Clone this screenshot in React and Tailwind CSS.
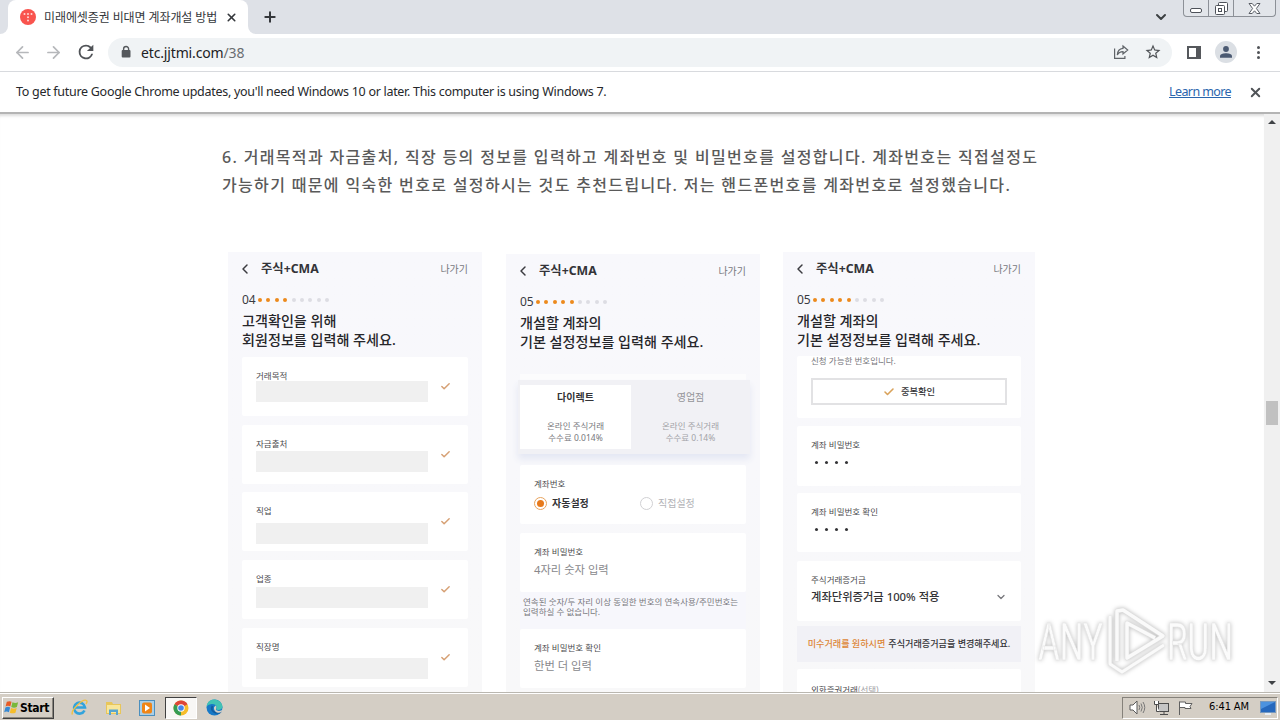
import { ArrowLeft, ArrowRight, Check, ChevronDown, ChevronLeft, Plus, X } from "lucide-react";

const purposeFields = [
  { label: "거래목적", gap: "h-[24px]" },
  { label: "자금출처", gap: "h-[26px]" },
  { label: "직업", gap: "h-[31px]" },
  { label: "업종", gap: "h-[27px]" },
  { label: "직장명", gap: "h-[30px]" },
];

function WindowButtons() {
  return (
    <div className="flex h-[17px] w-[93px] rounded-b-[4px] border border-t-0 border-[#8c9097] bg-[#e2e5ea]">
      <div className="flex w-[25px] justify-center border-r border-[#8c9097] pt-[8px]">
        <div className="h-[5px] w-[12px] rounded-[2px] border border-[#4d5159] bg-white"></div>
      </div>
      <div className="flex w-[25px] justify-center border-r border-[#8c9097] pt-[2px]">
        <svg width="13" height="13" viewBox="0 0 13 13" fill="#fff" stroke="#4d5159">
          <rect x="3.5" y="0.5" width="9" height="9" rx="1" />
          <rect x="0.5" y="3.5" width="9" height="9" rx="1" />
          <rect x="3.5" y="6.5" width="3" height="3" />
        </svg>
      </div>
      <div className="flex flex-1 justify-center pt-[3px]">
        <svg width="13" height="12" viewBox="0 0 13 12" fill="#fff" stroke="#5a5e66">
          <path d="M1 .5h3.200l2.300 2.700L8.800.5H12L8.400 5.500 12 10.500H8.800L6.500 7.800 4.200 10.500H1l3.600-5z" />
        </svg>
      </div>
    </div>
  );
}

function TabStrip() {
  return (
    <div className="flex h-[34px] shrink-0 bg-[#dee1e7]">
      <div className="flex w-[8px] bg-white">
        <div className="w-full rounded-br-[8px] bg-[#dee1e7]"></div>
      </div>
      <div className="flex w-[240px] items-center rounded-t-[8px] bg-white pl-[12px]">
        <svg width="16" height="16" viewBox="0 0 16 16">
          <circle cx="8" cy="8" r="8" fill="#f9544e" />
          <g fill="#ffd9d6">
            <circle cx="4.500" cy="5" r="1" />
            <circle cx="8" cy="5" r="1" />
            <circle cx="11.500" cy="5" r="1" />
            <circle cx="8" cy="8.300" r="1" />
            <circle cx="8" cy="11.500" r="1" />
          </g>
        </svg>
        <span className="ml-[8px] mt-[2px] w-[174px] whitespace-nowrap text-[12px] tracking-[-0.1px] text-[#34373b]">
          미래에셋증권 비대면 계좌개설 방법
        </span>
        <X className="ml-[7px] h-[13px] w-[13px] text-[#34373b]" strokeWidth={3} />
      </div>
      <div className="flex w-[8px] bg-white">
        <div className="w-full rounded-bl-[8px] bg-[#dee1e7]"></div>
      </div>
      <Plus className="ml-[6px] mt-[9px] h-[16px] w-[16px] text-[#34373b]" strokeWidth={3} />
      <div className="flex-1"></div>
      <ChevronDown className="mr-[14px] mt-[9px] h-[16px] w-[16px] text-[#3c4043]" strokeWidth={3} />
      <WindowButtons />
      <div className="w-[4px]"></div>
    </div>
  );
}

function Toolbar() {
  return (
    <div className="flex h-[38px] shrink-0 items-center border-b border-[#d8dade] bg-white pb-[1px] pl-[13px]">
      <ArrowLeft className="h-[19px] w-[19px] text-[#b6b8bb]" strokeWidth={2.2} />
      <ArrowRight className="ml-[12px] h-[19px] w-[19px] text-[#b6b8bb]" strokeWidth={2.2} />
      <svg className="ml-[12px]" width="22" height="22" viewBox="0 0 24 24" fill="#505357">
        <path d="M17.650 6.350A7.960 7.960 0 0 0 12 4a8 8 0 1 0 7.730 10h-2.080A6 6 0 1 1 12 6c1.660 0 3.140.690 4.220 1.780L13 11h7V4z" />
      </svg>
      <div className="ml-[11px] flex h-[29px] w-[1064px] items-center rounded-full bg-[#f0f3f5] pl-[12px] pr-[10px]">
        <svg width="12" height="14" viewBox="0 0 12 14">
          <rect x="1.700" y="5" width="8.800" height="7.500" rx="1" fill="#55585c" />
          <path d="M3.600 5.500V4a2.500 2.500 0 0 1 5 0v1.500" fill="none" stroke="#55585c" strokeWidth="1.400" />
        </svg>
        <span className="ml-[9px] whitespace-nowrap text-[14px] tracking-[-0.15px] text-[#202124]">
          etc.jjtmi.com<span className="text-[#6a6d71]">/38</span>
        </span>
        <div className="flex-1"></div>
        <svg width="16" height="16" viewBox="0 0 16 16" fill="none" stroke="#5f6368" strokeWidth="1.200">
          <path d="M1.600 4.500v9.900h10.300v-2.500" />
          <path d="M10 2l4.700 4-4.700 4V7.700C7.300 7.700 5.500 8.700 4.300 11 4.500 7.200 6.600 4.700 10 4.400z" />
        </svg>
        <svg className="ml-[15px]" width="18" height="18" viewBox="0 0 24 24" fill="#505357">
          <path d="M22 9.240l-7.190-.620L12 2 9.190 8.630 2 9.240l5.460 4.730L5.820 21 12 17.270 18.180 21l-1.630-7.030L22 9.240zM12 15.400l-3.760 2.270 1-4.280-3.320-2.880 4.380-.380L12 6.100l1.710 4.040 4.380.380-3.320 2.880 1 4.280L12 15.400z" />
        </svg>
      </div>
      <div className="ml-[15px] h-[13px] w-[14px] border-2 border-r-[5px] border-[#55585c]"></div>
      <div className="ml-[14px] flex h-[22px] w-[22px] items-center justify-center rounded-full bg-[#dbdfe4]">
        <svg width="14" height="14" viewBox="0 0 14 14" fill="#4b5a72">
          <circle cx="7" cy="4" r="2.900" />
          <path d="M1 12.800v-1.600C1 9 4.500 8.200 7 8.200s6 .800 6 3v1.600z" />
        </svg>
      </div>
      <div className="ml-[20px] flex flex-col gap-[2px]">
        <div className="h-[3px] w-[3px] rounded-full bg-[#505357]"></div>
        <div className="h-[3px] w-[3px] rounded-full bg-[#505357]"></div>
        <div className="h-[3px] w-[3px] rounded-full bg-[#505357]"></div>
      </div>
    </div>
  );
}

function InfoBar() {
  return (
    <div className="flex h-[42px] shrink-0 items-center border-b-2 border-[#b4b4b4] bg-white pl-[16px] pr-[17px] text-[12.5px] text-[#26282b]">
      <span className="whitespace-nowrap tracking-[-0.29px]">
        To get future Google Chrome updates, you'll need Windows 10 or later. This computer is using Windows 7.
      </span>
      <div className="flex-1"></div>
      <a className="whitespace-nowrap tracking-[-0.6px] text-[#2a65ad] underline">Learn more</a>
      <X className="ml-[17px] h-[15px] w-[15px] text-[#505357]" strokeWidth={3} />
    </div>
  );
}

// Common frame of the phone captures: title bar, step dots and two-line heading
function PhoneScreen({ className, step, done, lines, children }) {
  return (
    <div className={`flex flex-col overflow-hidden bg-linear-to-b from-[#f8f8fc] via-[#f8f8fb] to-[#f8f8f9] px-[14px] ${className}`}>
      <div className="flex h-[34px] shrink-0 items-center">
        <ChevronLeft className="-ml-[5px] h-[16px] w-[16px] text-[#3b3b40]" strokeWidth={2.2} />
        <span className="ml-[8px] mt-[1px] whitespace-nowrap text-[12.3px] font-bold text-[#333338]">주식+CMA</span>
        <span className="ml-auto whitespace-nowrap text-[10px] text-[#77777c]">나가기</span>
      </div>
      <div className="flex h-[28px] shrink-0 items-center">
        <span className="w-[16px] text-[12px] text-[#3a3a42]">{step}</span>
        <div className="flex gap-[4.4px]">
          {[...Array(9)].map((_, i) => (
            <div key={i} className={`h-[4px] w-[4px] rounded-full ${i < done ? "bg-[#ec8a1c]" : "bg-[#dddde3]"}`}></div>
          ))}
        </div>
      </div>
      <div className="-mt-[3px] h-[46px] shrink-0 whitespace-nowrap text-[14.1px] font-medium leading-[19px] text-[#26262a]">
        {lines.map((line) => (
          <p key={line}>{line}</p>
        ))}
      </div>
      {children}
    </div>
  );
}

function Card({ className, children }) {
  return <div className={`shrink-0 overflow-hidden rounded-[2px] bg-white px-[14px] ${className}`}>{children}</div>;
}

function Label({ children }) {
  return <p className="h-[12px] whitespace-nowrap text-[8.5px] leading-[12px] text-[#4a4a4e]">{children}</p>;
}

function Pin() {
  return (
    <div className="flex h-[22px] items-center gap-[7px] pl-[4px]">
      {[0, 1, 2, 3].map((i) => (
        <div key={i} className="h-[3px] w-[3px] rounded-full bg-[#333336]"></div>
      ))}
    </div>
  );
}

function CustomerScreen() {
  return (
    <PhoneScreen className="h-[440px] w-[254px]" step="04" done={4} lines={["고객확인을 위해", "회원정보를 입력해 주세요."]}>
      <div className="flex flex-col gap-[8.7px]">
        {purposeFields.map((field) => (
          <Card key={field.label} className="flex h-[59px] items-center justify-between pr-[17px]">
            <div className="h-full w-[172px]">
              <div className={`pt-[13px] ${field.gap}`}>
                <Label>{field.label}</Label>
              </div>
              <div className="h-[21px] bg-[#f0f0f0]"></div>
            </div>
            <Check className="h-[11px] w-[11px] text-[#d6a074]" strokeWidth={3.2} />
          </Card>
        ))}
      </div>
    </PhoneScreen>
  );
}

function AccountScreen() {
  return (
    <PhoneScreen
      className="mt-[2px] h-[438px] w-[254px]"
      step="05"
      done={5}
      lines={["개설할 계좌의", "기본 설정정보를 입력해 주세요."]}
    >
      <div className="mt-[15px] h-[6px] shrink-0 bg-[#fcfcfd]"></div>
      <div className="-ml-[2px] -mr-[4px] flex h-[74px] shrink-0 bg-[#f1f1f5] py-[5px] pl-[2px] text-center shadow-[0_5px_7px_#e4e7f3]">
        <div className="w-[111px] bg-white pt-[4px]">
          <p className="h-[16px] text-[10px] font-bold leading-[16px] text-[#333336]">다이렉트</p>
          <p className="mt-[15px] text-[8.5px] leading-[12px] text-[#77777c]">온라인 주식거래<br />수수료 0.014%</p>
        </div>
        <div className="flex-1 pt-[4px]">
          <p className="h-[16px] text-[10px] leading-[16px] text-[#949499]">영업점</p>
          <p className="mt-[15px] text-[8.5px] leading-[12px] text-[#a2a2a7]">온라인 주식거래<br />수수료 0.14%</p>
        </div>
      </div>
      <Card className="mt-[11px] h-[59px] pt-[13px]">
        <Label>계좌번호</Label>
        <div className="mt-[5px] flex h-[16px] items-center whitespace-nowrap text-[10px]">
          <div className="flex h-[13px] w-[13px] items-center justify-center rounded-full border border-[#e7a35e]">
            <div className="h-[7px] w-[7px] rounded-full bg-[#e77a1c]"></div>
          </div>
          <span className="ml-[5px] w-[88px] font-bold text-[#333336]">자동설정</span>
          <div className="h-[13px] w-[13px] rounded-full border border-[#d0d0d3]"></div>
          <span className="ml-[5px] text-[#b4b4b8]">직접설정</span>
        </div>
      </Card>
      <Card className="mt-[9px] h-[59px] pt-[13px]">
        <Label>계좌 비밀번호</Label>
        <p className="mt-[4px] text-[11.3px] leading-[16px] text-[#88888c]">4자리 숫자 입력</p>
      </Card>
      <div className="h-[37px] shrink-0 whitespace-nowrap bg-[#f7f7fc] pl-[3px] pt-[5px] text-[8.5px] leading-[10px] text-[#77777c]">
        <p>연속된 숫자/두 자리 이상 동일한 번호의 연속사용/주민번호는</p>
        <p>입력하실 수 없습니다.</p>
      </div>
      <Card className="h-[59px] pt-[13px]">
        <Label>계좌 비밀번호 확인</Label>
        <p className="mt-[4px] text-[11.3px] leading-[16px] text-[#88888c]">한번 더 입력</p>
      </Card>
    </PhoneScreen>
  );
}

function PasswordScreen() {
  return (
    <PhoneScreen className="h-[440px] w-[252px]" step="05" done={5} lines={["개설할 계좌의", "기본 설정정보를 입력해 주세요."]}>
      <Card className="-mt-[1px] h-[62px]">
        <p className="h-[22px] text-[8.5px] leading-[10px] text-[#77777c]">신청 가능한 번호입니다.</p>
        <div className="flex h-[27px] items-center justify-center gap-[6px] border-2 border-[#e2e2e4] text-[9.3px] font-medium text-[#333336]">
          <Check className="h-[12px] w-[12px] text-[#d9a25a]" strokeWidth={3.2} />
          중복확인
        </div>
      </Card>
      <Card className="mt-[8px] h-[60px] pt-[13px]">
        <Label>계좌 비밀번호</Label>
        <Pin />
      </Card>
      <Card className="mt-[7px] h-[59px] pt-[13px]">
        <Label>계좌 비밀번호 확인</Label>
        <Pin />
      </Card>
      <Card className="mt-[9px] h-[60px] pt-[13px]">
        <Label>주식거래증거금</Label>
        <div className="mt-[3px] flex h-[16px] items-center justify-between whitespace-nowrap text-[11.3px] font-medium text-[#333336]">
          계좌단위증거금 100% 적용
          <ChevronDown className="h-[12px] w-[12px] text-[#77777c]" strokeWidth={2.6} />
        </div>
      </Card>
      <div className="mt-[5px] flex h-[36px] shrink-0 items-center justify-center whitespace-nowrap bg-[#f1f1f6] text-[9.1px] font-medium text-[#333336]">
        <span className="mr-[3px] text-[#dd8637]">미수거래를 원하시면</span>
        주식거래증거금을 변경해주세요.
      </div>
      <Card className="mt-[7px] h-[40px] pt-[15px]">
        <Label>외화증권거래<span className="text-[#a2a2a7]">(선택)</span></Label>
      </Card>
    </PhoneScreen>
  );
}

function Scrollbar() {
  return (
    <div className="flex w-[16px] flex-col items-center bg-[#f0f0f0] pt-[6px]">
      <div className="border-x-4 border-b-4 border-x-transparent border-b-[#404347]"></div>
      <div className="mt-[277px] h-[24px] w-[12px] bg-[#c1c1c1]"></div>
      <div className="flex-1"></div>
      <div className="mb-[7px] border-x-4 border-t-4 border-x-transparent border-t-[#404347]"></div>
    </div>
  );
}

function Watermark() {
  return (
    <svg className="absolute left-[1034px] top-[604px] drop-shadow-[0_0_2px_#bcbcbc]" width="214" height="76" viewBox="0 0 214 76">
      <g fill="#fbfbfb" stroke="#e4e4e4" strokeWidth="0.5" fontFamily="Roboto, sans-serif" fontSize="52" fontWeight="400">
        <text x="4" y="56" textLength="65" lengthAdjust="spacingAndGlyphs">ANY</text>
        <text x="133" y="56" textLength="66" lengthAdjust="spacingAndGlyphs">RUN</text>
      </g>
      <g fill="none" strokeLinejoin="round">
        <path d="M76 12v48l12 8 42-27" stroke="#e4e4e4" strokeWidth="4" />
        <path d="M76 12v48l12 8 42-27" stroke="#fafafa" strokeWidth="2.800" />
        <path d="M83 57V7l6-1 40 26-36 22V19l28 15" stroke="#e0e0e0" strokeWidth="4.600" />
        <path d="M83 57V7l6-1 40 26-36 22V19l28 15" stroke="#fafafa" strokeWidth="3.400" />
      </g>
    </svg>
  );
}

function Taskbar() {
  return (
    <div className="flex h-[28px] shrink-0 items-center border-t border-[#bab7b0] bg-[#d4cec5] pt-[2px] shadow-[inset_0_1px_0_#fff]">
      <div className="ml-[2px] flex h-[22px] w-[52px] items-center border border-b-[#404040] border-l-white border-r-[#404040] border-t-white pl-[1px] shadow-[inset_-1px_-1px_0_#8a867e]">
        <svg className="shrink-0" width="16" height="17" viewBox="0 0 17 17">
          <path d="M3 2.500q3-1.500 5 0l-1.300 5q-2.500-1.500-5 0z" fill="#e85b25" />
          <path d="M9 3q3 1.500 6 0l-1.300 5q-3 1.300-6 0z" fill="#78b83b" />
          <path d="M1.500 8.500q3-1.500 5 0l-1.300 5q-2.500-1.500-5 0z" fill="#3689d4" />
          <path d="M7.500 9q3 1.500 6 0l-1.300 5q-3 1.300-6 0z" fill="#f5bd2b" />
        </svg>
        <span className="font-['DejaVu_Sans_Condensed','DejaVu_Sans',sans-serif] text-[12px] font-bold tracking-[-0.3px] text-black">Start</span>
      </div>
      <svg className="ml-[17px]" width="17" height="17" viewBox="0 0 17 17" fill="none">
        <path d="M13.500 11.500A5.500 5.500 0 1 1 14 8.500H4" stroke="#31a3dc" strokeWidth="2.600" />
        <path d="M1.500 15.500C-1 12 12-1 15.500 1.500c1 .800.300 2.500-.500 3.500" stroke="#f0c144" strokeWidth="1.400" />
      </svg>
      <svg className="ml-[17px]" width="17" height="16" viewBox="0 0 17 16">
        <path d="M1 2h6l1 2h8v10H1z" fill="#e8c65a" />
        <path d="M2 5h13v8H2z" fill="#f8e69b" />
        <path d="M4 15V9.500h9V15h-2v-3H6v3z" fill="#58a5cf" />
      </svg>
      <svg className="ml-[17px]" width="16" height="16" viewBox="0 0 16 16">
        <rect x="0.500" y="0.500" width="15" height="15" fill="#a9cfe8" stroke="#4b8fbe" />
        <rect x="3" y="2.500" width="10" height="11" rx="2" fill="#f08516" />
        <path d="M6 4.500l5 3.500-5 3.500z" fill="#fff" />
      </svg>
      <div className="ml-[10px] flex h-[22px] w-[32px] items-center justify-center border border-b-white border-l-[#404040] border-r-white border-t-[#404040] bg-[#f8f7f5]">
        <svg width="16" height="16" viewBox="0 0 16 16">
          <circle cx="8" cy="8" r="7.500" fill="#f6bd2a" />
          <path d="M8 8L1.500 4.250A7.500 7.500 0 0 1 14.500 4.250z" fill="#dd4638" />
          <path d="M8 8L8 15.500A7.500 7.500 0 0 1 1.500 4.250z" fill="#359c54" />
          <circle cx="8" cy="8" r="3.700" fill="#fff" />
          <circle cx="8" cy="8" r="2.800" fill="#4586ea" />
        </svg>
      </div>
      <svg className="ml-[9px]" width="17" height="17" viewBox="0 0 17 17">
        <circle cx="8.500" cy="8.500" r="8" fill="#1779c7" />
        <path d="M.600 8C1-1.500 14-2 16.500 7c.500 4-5 5-6.500 3.300 2-3-1-5.800-4.500-5.300C3 5.300 1 6.500.600 8z" fill="#42c2b4" />
        <path d="M6.500 7c-2.500 5 3 8.500 8.500 6" fill="none" stroke="#125c9f" strokeWidth="1.800" />
        <path d="M9.500 6.500c1.800 1.500.300 2.800.500 4.300 1 1.500 4 1.500 6 .200l-.500 2.200c-4 1.500-8-.500-7.500-5z" fill="#d4cec5" />
      </svg>
      <div className="flex-1"></div>
      <div className="mr-[2px] flex h-[22px] w-[156px] items-center border border-b-white border-l-[#85817a] border-r-white border-t-[#85817a] pl-[6px]">
        <svg width="17" height="15" viewBox="0 0 17 15" fill="none" stroke="#5b5b5b">
          <path d="M1 5h3l4-4v13l-4-4H1z" fill="#fff" />
          <path d="M10 5q1.500 2.500 0 5M12 3.500q2.500 4 0 8M14 2q3.500 5.500 0 11" stroke="#777" />
        </svg>
        <svg className="ml-[7px]" width="17" height="16" viewBox="0 0 17 16" fill="#fff" stroke="#4c4c4c">
          <rect x="5.500" y="3.500" width="10" height="8" fill="#c5c5c5" />
          <path d="M7 14.500h8M11 12v2M1.500 1v3.500h4V1M3.500 5v6.500h3" />
        </svg>
        <svg className="ml-[7px]" width="17" height="16" viewBox="0 0 17 16" fill="#fff" stroke="#606060">
          <path d="M2.500 15V1.500M2.500 2h6v1.500H15l-2 3 1 2H8V7.500H2.500z" />
        </svg>
        <span className="ml-[15px] w-[42px] whitespace-nowrap font-['DejaVu_Sans_Condensed','DejaVu_Sans',sans-serif] text-[11px] tracking-[-0.1px] text-black">6:41 AM</span>
        <svg className="ml-[9px]" width="16" height="14" viewBox="0 0 16 14">
          <rect x="0.500" y="0.500" width="15" height="11" fill="#2668bd" stroke="#7799bf" />
          <path d="M1 1h14L1 8z" fill="#4c92df" />
          <path d="M5 13h6" stroke="#e7edf4" strokeWidth="2" />
        </svg>
      </div>
    </div>
  );
}

export default function App() {
  return (
    <div className="relative flex h-[720px] w-[1280px] flex-col overflow-hidden bg-white font-['Noto_Sans','Noto_Sans_CJK_KR',sans-serif]">
      <TabStrip />
      <Toolbar />
      <InfoBar />
      <div className="flex h-[578px] shrink-0">
        <main className="flex-1 overflow-hidden pl-[222px] pt-[29px] shadow-[inset_0_4px_3px_-2px_#ddd]">
          <div className="whitespace-nowrap text-[16px] font-medium leading-[28px] tracking-[1.34px] text-[#5a5a5a]">
            <p>6. 거래목적과 자금출처, 직장 등의 정보를 입력하고 계좌번호 및 비밀번호를 설정합니다. 계좌번호는 직접설정도</p>
            <p>가능하기 때문에 익숙한 번호로 설정하시는 것도 추천드립니다. 저는 핸드폰번호를 계좌번호로 설정했습니다.</p>
          </div>
          <div className="ml-[6px] mt-[53px] flex">
            <CustomerScreen />
            <div className="w-[24px]"></div>
            <AccountScreen />
            <div className="w-[23px]"></div>
            <PasswordScreen />
          </div>
        </main>
        <Scrollbar />
      </div>
      <Taskbar />
      <Watermark />
    </div>
  );
}
